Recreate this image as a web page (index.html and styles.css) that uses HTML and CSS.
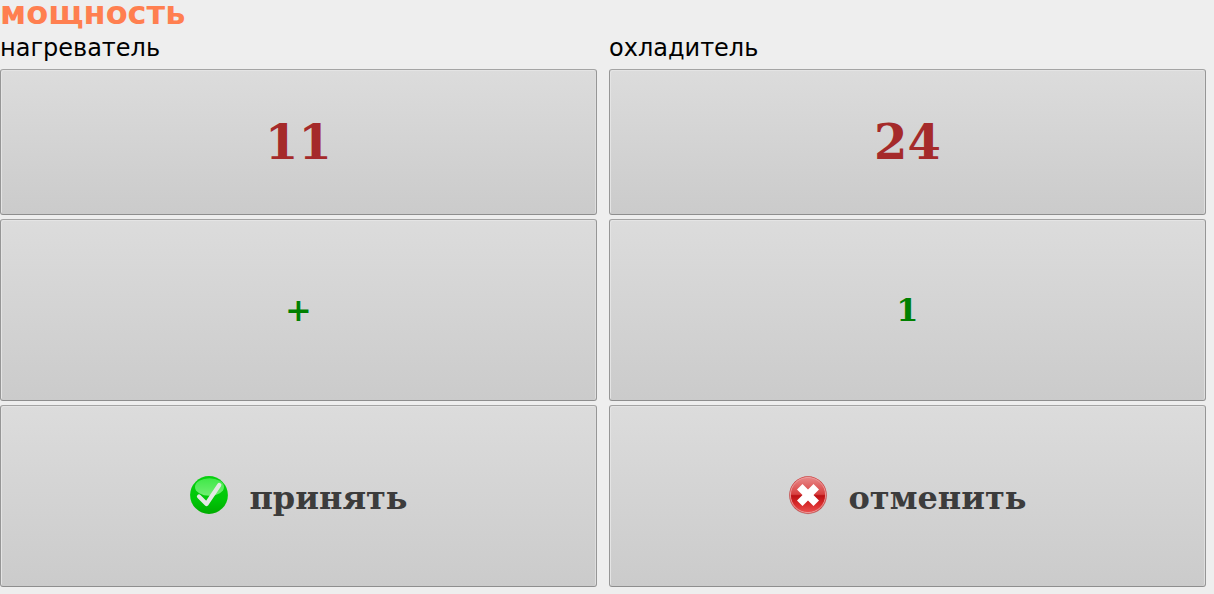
FILE: index.html
```html
<!DOCTYPE html>
<html lang="ru">
<head>
<meta charset="utf-8">
<title>мощность</title>
<link rel="stylesheet" href="styles.css">
</head>
<body>
<main class="panel">
  <h1 class="title">мощность</h1>
  <div class="grid">
    <label class="caption" for="heater">нагреватель</label>
    <label class="caption" for="cooler">охладитель</label>
    <button class="key value" id="heater" type="button">11</button>
    <button class="key value" id="cooler" type="button">24</button>
    <button class="key step" type="button">+</button>
    <button class="key step" type="button">1</button>
    <button class="key action" type="button">
      <svg class="icon" viewBox="0 0 40 40" aria-hidden="true">
        <defs>
          <linearGradient id="green" x1="0" y1="0" x2="0" y2="1">
            <stop offset="0" stop-color="#08d010"/>
            <stop offset="0.6" stop-color="#00c808"/>
            <stop offset="1" stop-color="#00ac00"/>
          </linearGradient>
          <linearGradient id="shine" x1="0" y1="0" x2="0" y2="1">
            <stop offset="0" stop-color="#40e848"/>
            <stop offset="1" stop-color="#70ee72"/>
          </linearGradient>
        </defs>
        <circle cx="20" cy="20" r="18.9" fill="url(#green)"/>
        <ellipse cx="20.5" cy="12" rx="14.5" ry="8.8" fill="url(#shine)"/>
        <path d="M10 21.5 17.5 29 30.3 10" fill="none" stroke="#e4e8e4" stroke-width="4.2" stroke-linecap="round" stroke-linejoin="round"/>
      </svg>
      <span class="word">принять</span>
    </button>
    <button class="key action" type="button">
      <svg class="icon" viewBox="0 0 40 40" aria-hidden="true">
        <defs>
          <linearGradient id="red" x1="0" y1="0" x2="0" y2="1">
            <stop offset="0" stop-color="#e88888"/>
            <stop offset="0.48" stop-color="#d84040"/>
            <stop offset="0.52" stop-color="#bc1014"/>
            <stop offset="0.8" stop-color="#dc3030"/>
            <stop offset="1" stop-color="#e85050"/>
          </linearGradient>
        </defs>
        <circle cx="20" cy="20.4" r="18.9" fill="#b8a8a8"/>
        <circle cx="20" cy="20" r="18.7" fill="#d44040"/>
        <circle cx="20" cy="20" r="17.6" fill="url(#red)" stroke="#eeb0b0" stroke-width="0.8"/>
        <path d="M14.5 9 20 14.5 25.5 9 31 14.5 25.5 20 31 25.5 25.5 31 20 25.5 14.5 31 9 25.5 14.5 20 9 14.5Z" fill="#fff"/>
      </svg>
      <span class="word">отменить</span>
    </button>
  </div>
</main>
</body>
</html>
```
FILE: styles.css
```css
* {
  box-sizing: border-box;
}

body {
  margin: 0;
  background: #eeeeee;
  color: #000;
  font-family: "DejaVu Sans", sans-serif;
}

.panel {
  padding-right: 8px;
}

.title {
  margin: 0;
  color: coral;
  font-size: 32px;
  font-weight: bold;
  line-height: 26px;
}

.grid {
  display: grid;
  grid-template-columns: 1fr 1fr;
  column-gap: 12px;
  row-gap: 4px;
}

.caption {
  padding-top: 6px;
  font-size: 24px;
  line-height: 33px;
}

.key {
  display: flex;
  align-items: center;
  justify-content: center;
  gap: 20px;
  min-height: 182px;
  padding: 0;
  border: 1px solid #969696;
  border-top-color: #a4a4a4;
  border-bottom-color: #8e8e8e;
  border-radius: 3px;
  background: linear-gradient(#dcdcdc, #cbcbcb);
  box-shadow: inset 1px 1px 0 #e4e4e4, inset -1px 0 0 #dedede;
  color: #3c3c3c;
  font-family: "DejaVu Serif", serif;
  font-size: 32px;
  font-weight: bold;
}

.value {
  min-height: 146px;
  color: brown;
  font-size: 48px;
}

.step {
  color: green;
}

.action {
  padding-bottom: 2px;
}

.word {
  padding-top: 6px;
}

.icon {
  width: 40px;
  height: 40px;
}
```
